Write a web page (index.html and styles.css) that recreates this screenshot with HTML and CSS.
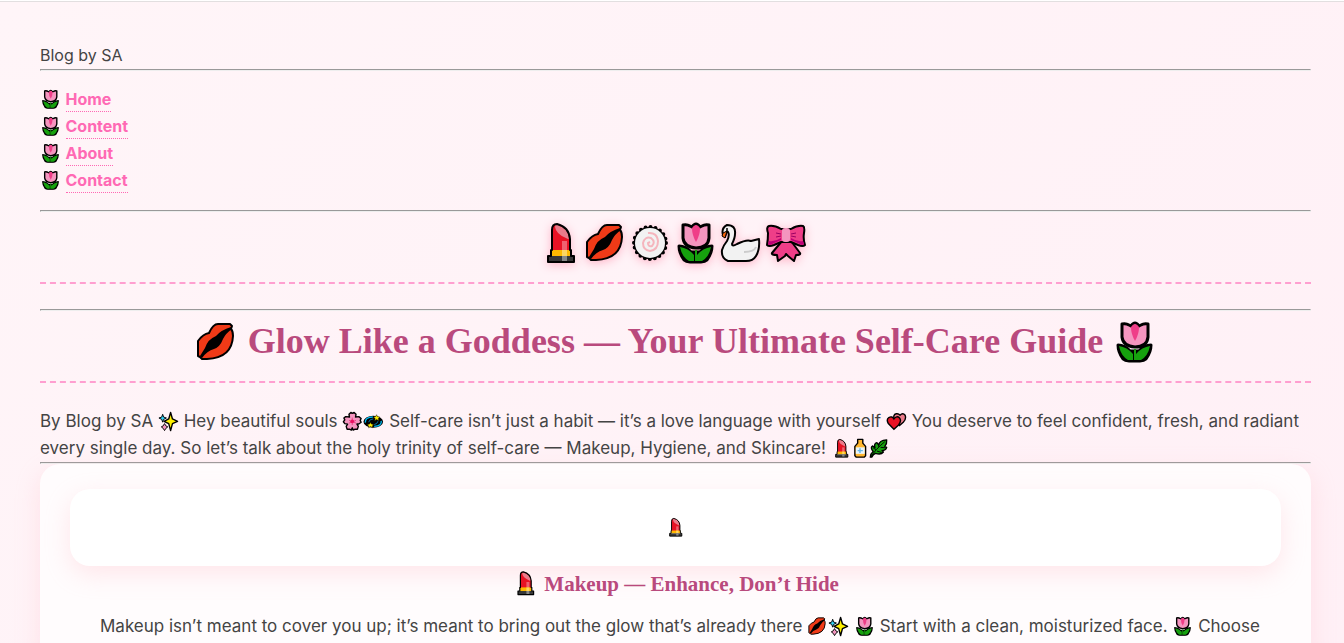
FILE: index.html
```html
<!DOCTYPE html>
<html lang="en">
<head>
<meta charset="utf-8">
<meta name="viewport" content="width=device-width, initial-scale=1">
<title>Blog by SA</title>
<link rel="stylesheet" href="styles.css">
</head>
<body>
<svg class="sprite" aria-hidden="true">
  <symbol id="lipstick" viewBox="0 0 45 45">
    <path d="M14 30V9Q14 3 19 3Q31 6 32 18V30" fill="#e81224"/>
    <path d="M24 20h5v9h-5z" fill="#ee6270"/>
    <path d="M17 6Q17 3 20 4Q30 7 31 17Q31 19 28 17Q18 13 17 6Z" fill="#ea7b8a"/>
    <path d="M13 29h20v6H13z" fill="#ffb900"/><path d="M24 29h5v6h-5z" fill="#ffd561"/>
    <path d="M10 35h26v6H10z" fill="#383838"/><path d="M24 35h5v6h-5z" fill="#888"/>
    <path d="M13 35V29H14V9Q14 3 19 3Q31 6 32 18V29H33V35H36V41H10V35Z" fill="none" stroke="#000" stroke-width="2" stroke-linejoin="round"/>
  </symbol>
  <symbol id="lips" viewBox="0 0 45 45">
    <path d="M15 13Q19 4 24 4H36L38 6L37 9Q39 11 39 16Q38 38 13 39H8L6 37L4 36V21Q9 14 15 13Z" fill="#f03a17" stroke="#000" stroke-width="2" stroke-linejoin="round"/>
    <path d="M37 7Q27 10 22 16Q14 19 11 28L6 36L8 38Q13 31 20 29Q26 27 29 19Q32 13 38 9Z"/>
  </symbol>
  <symbol id="swirl" viewBox="0 0 45 45">
    <circle cx="22" cy="22" r="16" stroke="#000" stroke-width="1"/>
    <circle cx="22" cy="22" r="16" fill="none" stroke="#000" stroke-width="4" stroke-linecap="round" stroke-dasharray="0 5.03"/>
    <circle cx="22" cy="22" r="15" fill="#f2f2f2"/>
    <path d="M20 12Q29 11 30 20Q30 29 22 30Q15 29 15 22Q17 15 23 17Q28 21 24 25Q20 26 20 22L22 21" fill="none" stroke="#f5b5bd" stroke-width="2"/>
  </symbol>
  <symbol id="tulip" viewBox="0 0 45 45">
    <path d="M6 25Q13 25 18 31H27Q32 25 39 25Q39 32 34 39Q32 41 28 41H17Q13 41 11 39Q6 32 6 25Z" stroke="#000" stroke-width="3" stroke-linejoin="round"/>
    <path d="M7 26Q15 27 21 34V40H16Q9 36 7 26ZM38 26Q30 27 24 34V40H29Q36 36 38 26ZM22 29H24V40H22Z" fill="#16a10e"/>
    <path d="M10 4Q14 3 17 5L19 6Q21 3 23 3Q25 3 27 6L29 5Q32 3 36 4V17Q35 27 23 27Q11 26 10 17Z" fill="#f495bf" stroke="#000" stroke-width="3" stroke-linejoin="round"/>
    <path d="M19 7Q21 4 23 4Q25 4 27 7Q27 14 23 21Q19 14 19 7Z" fill="#ef3e88"/>
  </symbol>
  <symbol id="swan" viewBox="0 0 45 45">
    <path d="M5 14Q3 7 9 4Q18 4 17 13Q17 17 14 23Q14 26 19 23Q29 18 33 20L41 18Q42 28 38 35Q35 40 28 40H10Q3 37 4 29Q5 25 9 20Q12 14 10 11L9 10L7 16Z" fill="#f2f2f2" stroke="#000" stroke-width="2" stroke-linejoin="round"/>
    <path d="M5 12L9 10L7 17L4 15Z" fill="#f7630c" stroke="#000"/><circle cx="9" cy="8" r="1"/>
    <path d="M26 31Q36 31 38 26" fill="none" stroke="#ccc" stroke-width="2"/>
  </symbol>
  <symbol id="bow" viewBox="0 0 45 45">
    <path d="M19 20L9 32Q8 34 14 34L15 40L22 35L23 33L25 35L31 40L33 34Q38 34 37 32L28 20Z" fill="#ef3e88" stroke="#000" stroke-width="2" stroke-linejoin="round"/>
    <path d="M18 8Q11 4 6 5Q3 6 5 12Q5 19 4 24Q6 26 11 24L18 21H28L35 24Q40 26 42 24Q40 18 41 12Q42 6 40 5Q35 4 28 8Z" fill="#ef3e88" stroke="#000" stroke-width="2" stroke-linejoin="round"/>
    <path d="M6 20Q12 21 18 17V19L7 24L5 23ZM40 20Q34 21 28 17V19L39 24L41 23Z" fill="#bf0077"/>
    <path d="M13 12L18 13M13 16L18 15M33 12L28 13M33 16L28 15" stroke="#9b0062" stroke-width="1"/>
    <rect x="19" y="7" width="8" height="14" rx="3" fill="#f495bf"/>
  </symbol>
  <symbol id="sparkles" viewBox="0 0 45 45">
    <path d="M27 3L31 17L42 22L31 27L27 42L23 27L13 22L23 17Z" fill="#fff100" stroke="#000" stroke-width="3" stroke-linejoin="round"/>
    <path d="M10 7L12 13L18 15L12 18L10 24L8 18L2 15L8 13Z" fill="#31d2f7" stroke="#000" stroke-width="2"/>
    <path d="M14 27L17 32L21 34L17 37L14 42L11 37L7 34L11 32Z" fill="#f495bf" stroke="#000" stroke-width="2"/>
  </symbol>
  <symbol id="blossom" viewBox="0 0 45 45">
    <path d="M16 13L15 7L19 3L22 5L26 3L30 7L29 13L36 12L41 16L39 20L41 24L36 28L32 28L35 33L33 39H28L24 41L22 36L20 41L16 39H11L9 33L12 28L6 27L3 23L6 19L4 15L8 12Z" fill="#f495bf" stroke="#000" stroke-width="3" stroke-linejoin="round"/>
    <path d="M22 14V30M15 20L30 26M30 20L15 26" stroke="#ef3e88" stroke-width="2"/><circle cx="22" cy="22" r="4" fill="#e81260"/>
  </symbol>
  <symbol id="dizzy" viewBox="0 0 45 45">
    <ellipse cx="22" cy="23" rx="21" ry="13" fill="#000"/>
    <path d="M39 21Q41 32 24 33M5 25Q4 13 21 13" fill="none" stroke="#00bcf2" stroke-width="3"/>
    <path d="M12 24Q14 17 22 17M32 22Q31 28 24 29" fill="none" stroke="#0078b1" stroke-width="2"/>
    <path d="M29 8L31 12L36 13L33 16L34 21L29 18L25 21L26 16L22 13L27 12ZM16 24L18 28L23 29L20 32L21 36L16 33L12 36L12 32L9 29L14 28Z" fill="#fff100" stroke="#000"/>
  </symbol>
  <symbol id="hearts" viewBox="0 0 45 45">
    <path d="M29 31L18 18Q14 8 22 6Q27 5 30 9Q36 3 41 9Q44 17 37 24Z" fill="#ea7b8a" stroke="#000" stroke-width="3"/>
    <path d="M17 39L5 27Q0 18 6 14Q13 10 17 17Q23 9 29 15Q34 21 27 30Z" fill="#e81224" stroke="#000" stroke-width="3"/>
  </symbol>
  <symbol id="lotion" viewBox="5 0 34 45">
    <path d="M17 3H28V11L34 18V38L31 41H14L11 38V18L17 11Z" fill="#ffb52e" stroke="#000" stroke-width="3" stroke-linejoin="round"/>
    <path d="M13 20H32V34H13Z" fill="#e8f5fb"/><path d="M22 22V32M17 27H28" stroke="#64b5e8" stroke-width="3"/>
  </symbol>
  <symbol id="herb" viewBox="0 0 45 45">
    <path d="M5 41Q5 34 11 29Q4 20 10 17L15 21Q12 12 19 10L23 15Q24 5 40 4Q41 12 36 18L40 20Q38 27 30 27L33 30Q28 37 16 33Q11 35 8 41Z" fill="#16a10e" stroke="#000" stroke-width="3" stroke-linejoin="round"/>
    <path d="M7 40Q15 25 36 8M23 19V13M17 25L11 21M27 20L37 21M19 28L29 31" fill="none" stroke="#000" stroke-width="2"/>
  </symbol>
</svg>

<header>
  <div>Blog by SA</div>
  <hr>
  <nav>
    <ul class="menu">
      <li><svg class="emoji"><use href="#tulip"/></svg> <a href="#home">Home</a></li>
      <li><svg class="emoji"><use href="#tulip"/></svg> <a href="#content">Content</a></li>
      <li><svg class="emoji"><use href="#tulip"/></svg> <a href="#about">About</a></li>
      <li><svg class="emoji"><use href="#tulip"/></svg> <a href="#contact">Contact</a></li>
    </ul>
  </nav>
  <hr>
  <div class="title charms"><svg class="emoji"><use href="#lipstick"/></svg><svg class="emoji"><use href="#lips"/></svg><svg class="emoji"><use href="#swirl"/></svg><svg class="emoji"><use href="#tulip"/></svg><svg class="emoji"><use href="#swan"/></svg><svg class="emoji"><use href="#bow"/></svg></div>
  <hr>
</header>
<main id="home">
  <h1 class="title"><svg class="emoji"><use href="#lips"/></svg> Glow Like a Goddess — Your Ultimate Self-Care Guide <svg class="emoji"><use href="#tulip"/></svg></h1>
  <p class="intro">By Blog by SA <svg class="emoji"><use href="#sparkles"/></svg> Hey beautiful souls <svg class="emoji"><use href="#blossom"/></svg><svg class="emoji"><use href="#dizzy"/></svg> Self-care isn’t just a habit — it’s a love language with yourself <svg class="emoji"><use href="#hearts"/></svg> You deserve to feel confident, fresh, and radiant every single day. So let’s talk about the holy trinity of self-care — Makeup, Hygiene, and Skincare! <svg class="emoji"><use href="#lipstick"/></svg><svg class="emoji slim"><use href="#lotion"/></svg><svg class="emoji"><use href="#herb"/></svg></p>
  <hr>
  <section class="card topic" id="content">
    <div class="card banner"><svg class="emoji"><use href="#lipstick"/></svg></div>
    <h2 class="heading"><svg class="emoji"><use href="#lipstick"/></svg> Makeup — Enhance, Don’t Hide</h2>
    <p class="copy">Makeup isn’t meant to cover you up; it’s meant to bring out the glow that’s already there <svg class="emoji"><use href="#lips"/></svg><svg class="emoji"><use href="#sparkles"/></svg> <svg class="emoji"><use href="#tulip"/></svg> Start with a clean, moisturized face. <svg class="emoji"><use href="#tulip"/></svg> Choose</p>
  </section>
</main>
</body>
</html>
```
FILE: styles.css
```css
* { box-sizing: border-box; }
body {
  margin: 0;
  padding: 41px 33px 0 40px;
  border-top: 1px solid #fff;
  background: linear-gradient(135deg, #fff5f8, #fff0f6);
  box-shadow: inset 0 1px #e2dfe0;
  color: #444;
  font: 16px/27px Inter, "Open Sans", sans-serif;
}
.sprite { position: absolute; width: 0; height: 0; }
hr { margin: 0; border: 1px solid; border-color: #999 #eee #eee #999; }
.emoji { width: 21px; height: 21px; vertical-align: -5px; }
.slim { width: 16px; }
.menu { list-style: none; margin: 15px 0 16px; padding: 0; }
.menu a {
  padding-bottom: 2px;
  border-bottom: 1px dotted #ff69b4;
  color: #ff69b4;
  font-weight: 700;
  text-decoration: none;
}
.title {
  margin: 0 0 25px;
  padding-bottom: 10px;
  border-bottom: 2px dashed #ff9fd0;
  color: #b94a7d;
  font: 600 36px/60px "Liberation Serif", serif;
  text-align: center;
}
.title .emoji { width: 45px; height: 45px; vertical-align: -12px; }
.charms { padding-right: 6px; }
.charms .emoji { filter: drop-shadow(0 2px 5px #ffb6c9); }
.intro, .copy { font-size: 17px; }
.intro { margin: 0; }
.card {
  border-radius: 20px;
  background: #fffcfd;
  box-shadow: 0 8px 25px rgba(255, 182, 193, .3);
}
.topic { padding: 25px 30px; text-align: center; }
.banner { padding: 25px; background: #fff; }
.heading { margin: 0 0 10px; color: #b94a7d; font: 600 21px/37px "Liberation Serif", serif; }
.heading .emoji { width: 27px; height: 27px; vertical-align: -6px; }
.copy { margin: 0 15px 0 30px; text-align: left; }
```
